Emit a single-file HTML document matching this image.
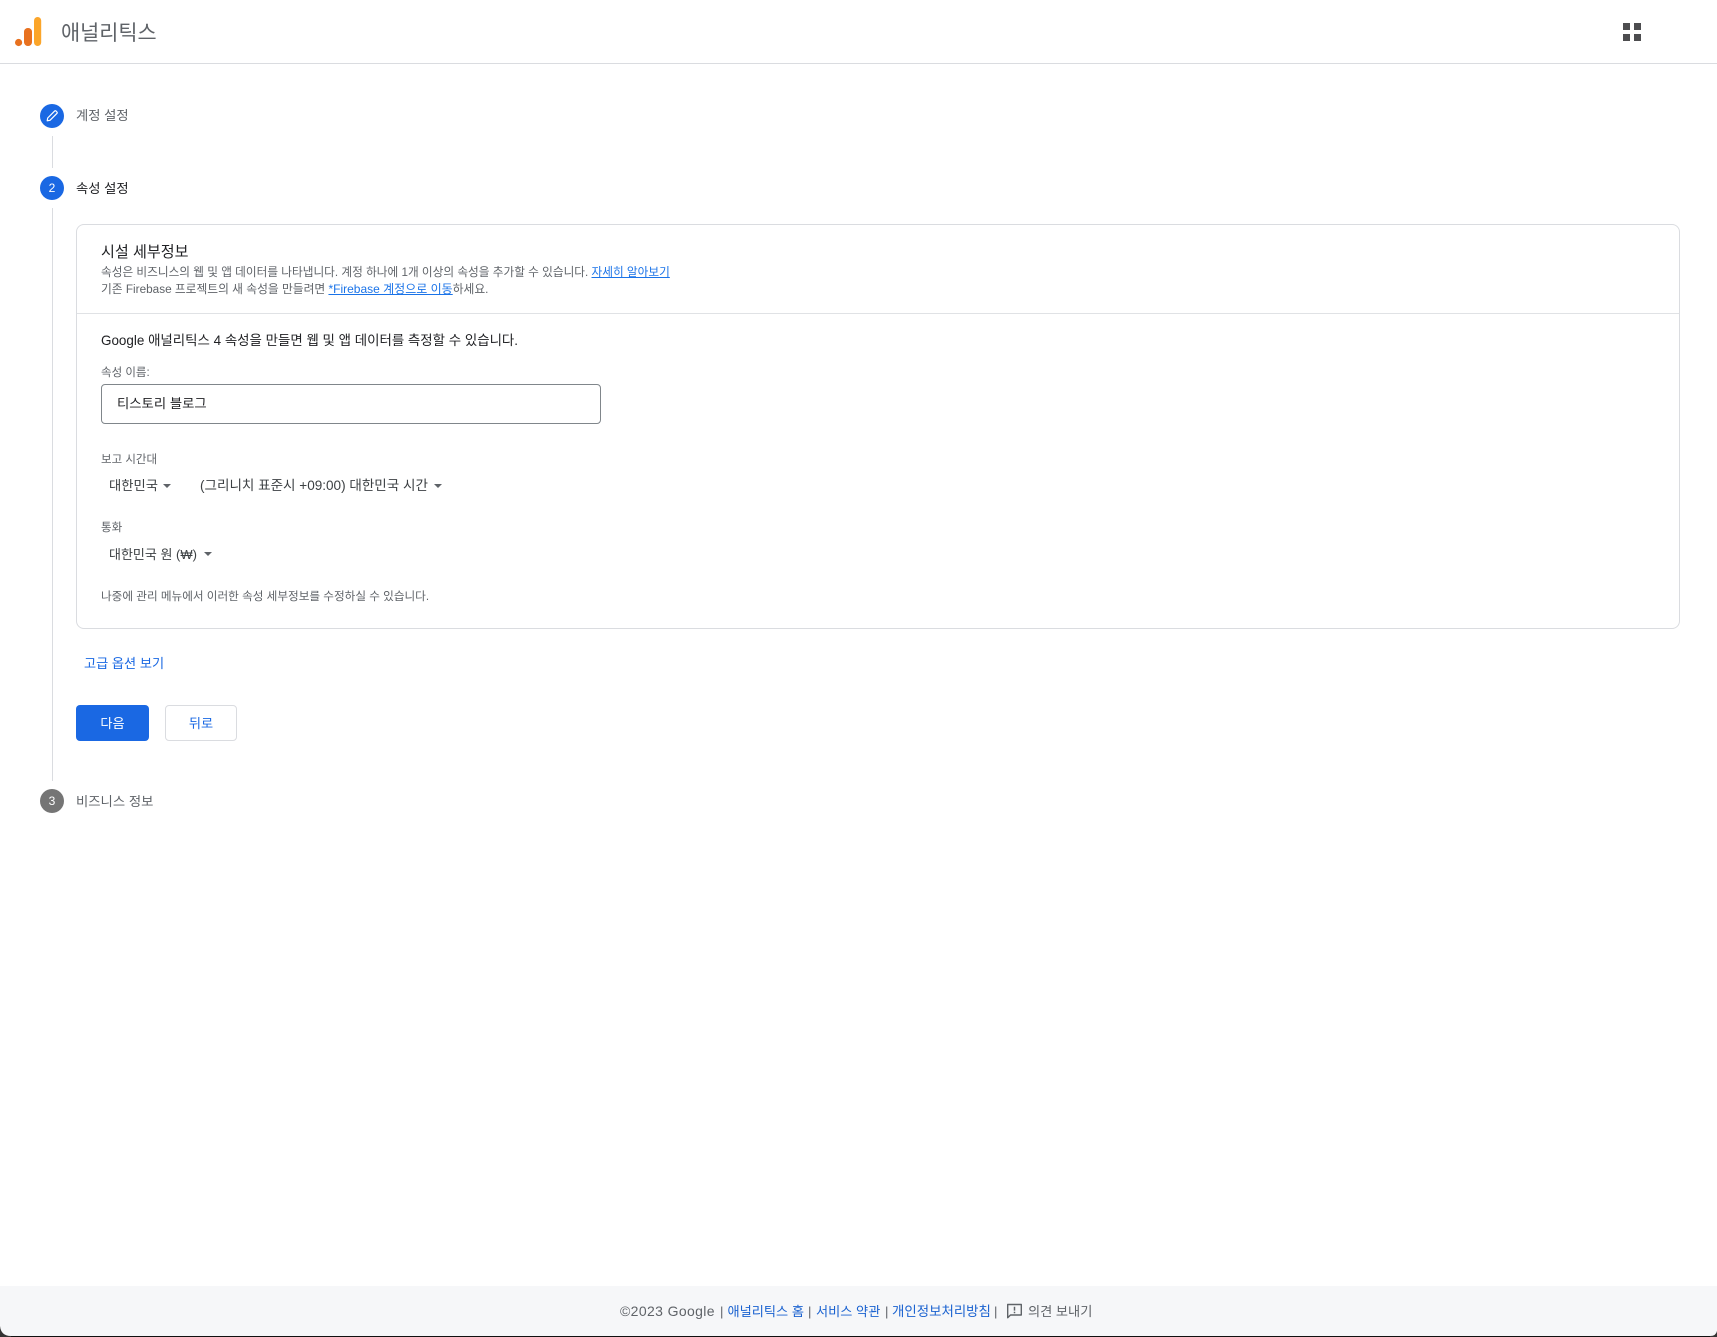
<!DOCTYPE html>
<html lang="ko">
<head>
<meta charset="utf-8">
<title>애널리틱스</title>
<style>
html,body{margin:0;padding:0;background:#fff;}
body{position:relative;width:1717px;height:1337px;overflow:hidden;font-family:"Liberation Sans","Noto Sans CJK KR",sans-serif;color:#202124;}
.t{position:absolute;white-space:nowrap;line-height:20px;height:20px;}
.a{position:absolute;}
a{color:#1a73e8;text-decoration:underline;}
.arrow{position:absolute;width:0;height:0;border-left:4px solid transparent;border-right:4px solid transparent;border-top:4px solid #5f6368;}
.c{position:absolute;left:40px;width:24px;height:24px;border-radius:50%;color:#fff;font-size:12px;line-height:24px;text-align:center;}
.vl{position:absolute;left:52px;width:1px;background:#dadce0;}
.f{font-size:13.2px;color:#5f6368;top:1302px;}
.l{color:#1a62d0;}
</style>
</head>
<body>
<!-- header -->
<div class="a" style="left:0;top:0;width:1717px;height:63px;border-bottom:1px solid #dadce0;"></div>
<svg class="a" style="left:14px;top:16px" width="30" height="32" viewBox="0 0 30 32">
<circle cx="4.6" cy="26.5" r="3.6" fill="#e8711f"/>
<rect x="10" y="12" width="8" height="18" rx="3.8" fill="#e8711f"/>
<rect x="20" y="1" width="7.2" height="29" rx="3.6" fill="#fba52a"/>
</svg>
<div class="t" style="left:61px;top:19px;height:30px;line-height:30px;font-size:20.8px;color:#5f6368;">애널리틱스</div>
<svg class="a" style="left:1623px;top:23px" width="18" height="18" viewBox="0 0 18 18" fill="#4d4d4f">
<rect x="0" y="0" width="7" height="7"/><rect x="11" y="0" width="7" height="7"/><rect x="0" y="11" width="7" height="7"/><rect x="11" y="11" width="7" height="7"/>
</svg>

<!-- stepper -->
<div class="c" style="top:104px;background:#1a68e3;"></div>
<svg class="a" style="left:40px;top:104px" width="24" height="24" viewBox="0 0 24 24" fill="none" stroke="#fff" stroke-width="1.2" stroke-linejoin="round">
<path d="M7.2 16.8 L7.7 14 L14.6 7.1 Q15.3 6.4 16 7.1 L16.9 8 Q17.6 8.7 16.9 9.4 L10 16.3 Z"/>
</svg>
<div class="t" style="left:76px;top:106px;font-size:13.3px;color:#5f6368;">계정 설정</div>
<div class="vl" style="top:136px;height:32px;"></div>

<div class="c" style="top:176px;background:#1a68e3;">2</div>
<div class="t" style="left:76px;top:179px;font-size:13.3px;color:#202124;">속성 설정</div>
<div class="vl" style="top:208px;height:573px;"></div>

<!-- card -->
<div class="a" style="left:76px;top:224px;width:1602px;height:403px;border:1px solid #dadce0;border-radius:8px;"></div>
<div class="a" style="left:77px;top:313px;width:1602px;height:1px;background:#e0e2e5;"></div>
<div class="t" style="left:101px;top:242px;height:22px;line-height:22px;font-size:15.1px;color:#202124;">시설 세부정보</div>
<div class="t" style="left:101px;top:263px;font-size:11.66px;color:#5f6368;">속성은 비즈니스의 웹 및 앱 데이터를 나타냅니다. 계정 하나에 1개 이상의 속성을 추가할 수 있습니다. <a href="#">자세히 알아보기</a></div>
<div class="t" style="left:101px;top:279px;font-size:11.75px;color:#5f6368;">기존 Firebase 프로젝트의 새 속성을 만들려면 <a href="#" style="font-size:12px;">*Firebase 계정으로 이동</a>하세요.</div>
<div class="t" style="left:101px;top:331px;font-size:13.45px;color:#202124;">Google 애널리틱스 4 속성을 만들면 웹 및 앱 데이터를 측정할 수 있습니다.</div>
<div class="t" style="left:101px;top:363px;font-size:11.5px;color:#5f6368;">속성 이름:</div>
<div class="a" style="left:101px;top:384px;width:498px;height:38px;border:1px solid #80868b;border-radius:4px;"></div>
<div class="t" style="left:117px;top:394px;font-size:13.35px;color:#202124;">티스토리 블로그</div>

<div class="t" style="left:101px;top:450px;font-size:11.5px;color:#5f6368;">보고 시간대</div>
<div class="t" style="left:109px;top:476px;font-size:13.3px;color:#3c4043;">대한민국</div>
<div class="arrow" style="left:163px;top:484px;"></div>
<div class="t" style="left:200px;top:476px;font-size:13.55px;color:#3c4043;">(그리니치 표준시 +09:00) 대한민국 시간</div>
<div class="arrow" style="left:434px;top:484px;"></div>

<div class="t" style="left:101px;top:518px;font-size:11.5px;color:#5f6368;">통화</div>
<div class="t" style="left:109px;top:545px;font-size:13px;color:#3c4043;">대한민국 원 (₩)</div>
<div class="arrow" style="left:204px;top:552px;"></div>
<div class="t" style="left:101px;top:587px;font-size:11.62px;color:#5f6368;">나중에 관리 메뉴에서 이러한 속성 세부정보를 수정하실 수 있습니다.</div>

<div class="t" style="left:84px;top:654px;font-size:13.2px;color:#1a68e3;">고급 옵션 보기</div>
<div class="a" style="left:76px;top:705px;width:73px;height:36px;background:#1a68e3;border-radius:4px;color:#fff;font-size:13.2px;line-height:37px;text-align:center;">다음</div>
<div class="a" style="left:165px;top:705px;width:70px;height:34px;border:1px solid #dadce0;border-radius:4px;color:#1a68e3;font-size:13.2px;line-height:35px;text-align:center;">뒤로</div>

<div class="c" style="top:789px;background:#757575;">3</div>
<div class="t" style="left:76px;top:792px;font-size:13.35px;color:#5f6368;">비즈니스 정보</div>

<!-- footer -->
<div class="a" style="left:0;top:1286px;width:1717px;height:50px;background:#f6f7f9;"></div>
<div class="t f" style="left:620px;top:1301px;font-size:14px;letter-spacing:.37px;">©2023 Google</div>
<div class="t f" style="left:720px;">|</div>
<div class="t f l" style="left:727.5px;">애널리틱스 홈</div>
<div class="t f" style="left:808px;">|</div>
<div class="t f l" style="left:816px;">서비스 약관</div>
<div class="t f" style="left:885px;">|</div>
<div class="t f l" style="left:892px;font-size:13.45px;">개인정보처리방침</div>
<div class="t f" style="left:994px;">|</div>
<svg class="a" style="left:1006px;top:1303px" width="17" height="17" viewBox="0 0 17 17" fill="none" stroke="#5f6368" stroke-width="1.4">
<path d="M1.7 1.5 H15.3 V12 H4.5 L1.7 14.8 Z" stroke-linejoin="round"/>
<path d="M8.5 3.8 V7.6 M8.5 8.8 V10.2" stroke-width="1.5"/>
</svg>
<div class="t f" style="left:1028px;">의견 보내기</div>

<!-- window edge -->
<div class="a" style="left:0;top:1336px;width:1717px;height:1px;background:#111;"></div>
<svg class="a" style="left:0;top:1326px" width="11" height="11" viewBox="0 0 11 11"><path d="M0 0 Q1 10 11 10 V11 H0 Z" fill="#333"/></svg>
<svg class="a" style="left:1706px;top:1326px" width="11" height="11" viewBox="0 0 11 11"><path d="M11 5 Q10 10 4 10 V11 H11 Z" fill="#333"/></svg>
</body>
</html>
